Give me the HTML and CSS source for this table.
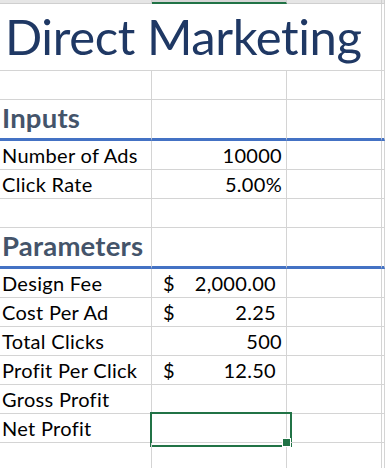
FILE: index.html
```html
<!DOCTYPE html>
<html lang="en">
<head>
<meta charset="utf-8">
<title>Direct Marketing</title>
<link rel="stylesheet" href="styles.css">
</head>
<body>
<div class="sheet">
  <div class="row hdr">
    <div class="hc"></div><div class="hc hc-sel"></div><div class="hc"></div><div class="hc"></div>
  </div>
  <div class="row r-title">
    <div class="cell title">Direct Marketing</div><div class="cell"></div>
  </div>
  <div class="row"><div class="cell"></div><div class="cell"></div><div class="cell"></div><div class="cell"></div></div>
  <div class="row r-head">
    <div class="cell head">Inputs</div><div class="cell"></div><div class="cell"></div><div class="cell"></div>
  </div>
  <div class="row"><div class="cell">Number of Ads</div><div class="cell num">10000</div><div class="cell"></div><div class="cell"></div></div>
  <div class="row"><div class="cell">Click Rate</div><div class="cell num">5.00%</div><div class="cell"></div><div class="cell"></div></div>
  <div class="row"><div class="cell"></div><div class="cell"></div><div class="cell"></div><div class="cell"></div></div>
  <div class="row r-head">
    <div class="cell head">Parameters</div><div class="cell"></div><div class="cell"></div><div class="cell"></div>
  </div>
  <div class="row"><div class="cell">Design Fee</div><div class="cell acct"><span>$</span><span>2,000.00</span></div><div class="cell"></div><div class="cell"></div></div>
  <div class="row"><div class="cell">Cost Per Ad</div><div class="cell acct"><span>$</span><span>2.25</span></div><div class="cell"></div><div class="cell"></div></div>
  <div class="row"><div class="cell">Total Clicks</div><div class="cell num">500</div><div class="cell"></div><div class="cell"></div></div>
  <div class="row"><div class="cell">Profit Per Click</div><div class="cell acct"><span>$</span><span>12.50</span></div><div class="cell"></div><div class="cell"></div></div>
  <div class="row"><div class="cell">Gross Profit</div><div class="cell"></div><div class="cell"></div><div class="cell"></div></div>
  <div class="row"><div class="cell">Net Profit</div><div class="cell selected"></div><div class="cell"></div><div class="cell"></div></div>
  <div class="row"><div class="cell"></div><div class="cell"></div><div class="cell"></div><div class="cell"></div></div>
</div>
</body>
</html>
```
FILE: styles.css
```css
* { box-sizing: border-box; }
html, body {
  margin: 0;
  padding: 0;
  background: #ffffff;
  overflow: hidden;
}
.sheet {
  width: 385px;
  height: 468px;
  overflow: hidden;
  font-family: Lato, "Open Sans", sans-serif;
  font-size: 20px;
  letter-spacing: 0.3px;
  font-variant-ligatures: none;
  font-feature-settings: "liga" 0, "clig" 0;
  color: #000;
}
.row {
  display: grid;
  grid-template-columns: 152px 135px 95px 1fr;
  height: 29px;
}
.cell {
  border-right: 1px solid #d4d4d4;
  border-bottom: 1px solid #d4d4d4;
  display: flex;
  align-items: flex-end;
  padding: 0 0 4px 2px;
  line-height: 1;
  white-space: nowrap;
  position: relative;
}
.hdr { height: 4px; }
.hc {
  background: #e6e6e6;
  border-bottom: 1px solid #cfcfcf;
  border-right: 1px solid #cfcfcf;
}
.hc-sel {
  background: #d6d6d6;
  border-bottom: 2px solid #217346;
}
.r-title { height: 67px; }
.title {
  grid-column: span 3;
  font-weight: 400;
  font-size: 49px;
  letter-spacing: -0.4px;
  color: #1f3864;
  padding: 0 0 9px 5px;
}
.r-head { height: 41px; }
.r-head .cell {
  border-bottom: 3px solid #4472c4;
}
.head {
  font-weight: 700;
  font-size: 27.5px;
  letter-spacing: 0.2px;
  color: #44546a;
  padding-bottom: 7px;
}
.num {
  justify-content: flex-end;
  padding-right: 4px;
}
.acct {
  justify-content: space-between;
  padding-left: 11px;
  padding-right: 10px;
}
.selected::after {
  content: "";
  position: absolute;
  left: -2px;
  top: -2px;
  width: 138px;
  height: 31px;
  border: 2px solid #217346;
}
.selected::before {
  content: "";
  position: absolute;
  left: 130px;
  top: 24px;
  width: 7px;
  height: 7px;
  background: #217346;
  border: 1px solid #ffffff;
  z-index: 2;
}
```
